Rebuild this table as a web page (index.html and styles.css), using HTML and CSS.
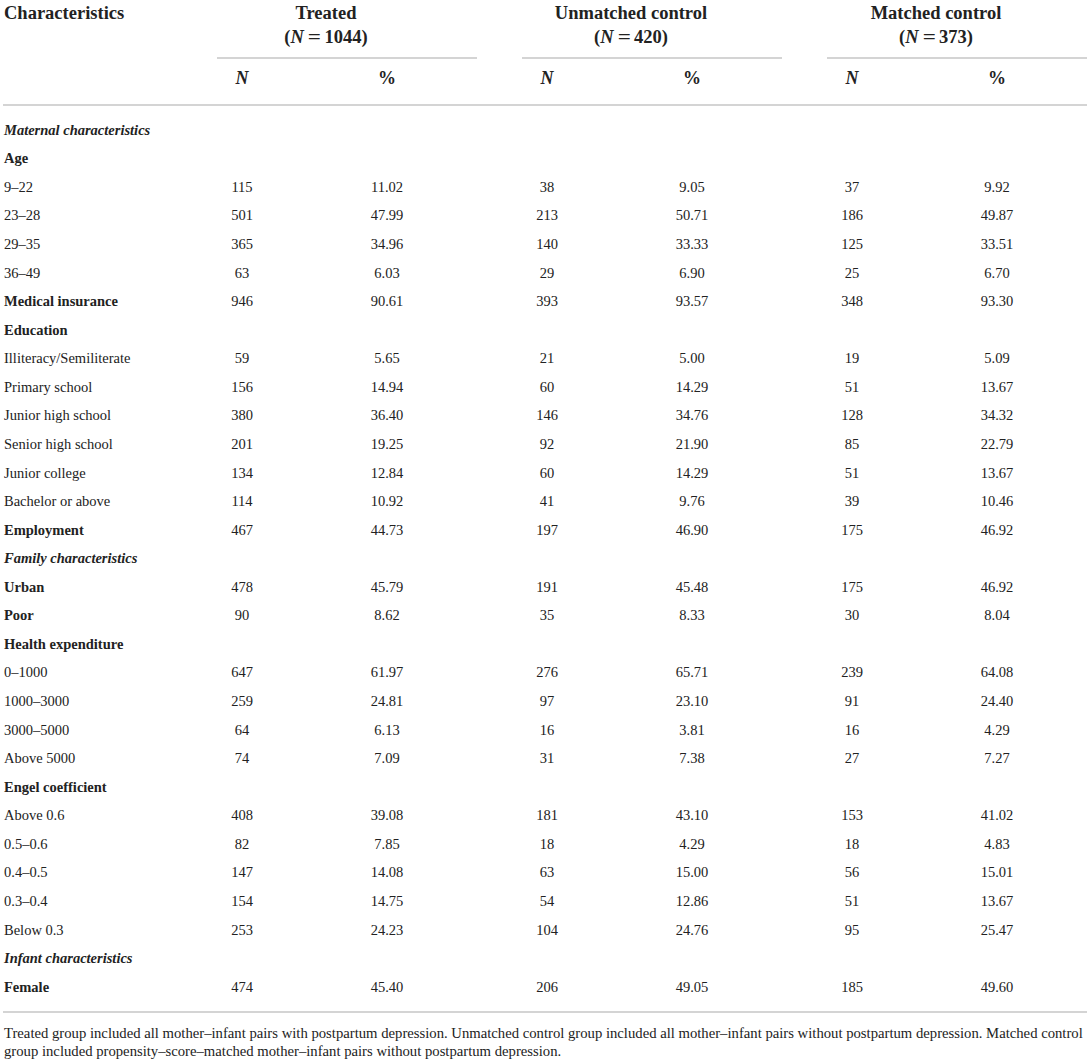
FILE: index.html
```html
<!DOCTYPE html>
<html>
<head>
<meta charset="utf-8">
<link rel="stylesheet" href="styles.css">
</head>
<body>
<div class="page">
  <div class="head">
    <div class="row hrow">
      <div class="hlabel">Characteristics</div>
      <div class="gh"><div class="gt">Treated<br>(<i>N</i><span class="eq">=</span>1044)</div></div>
      <div class="gh"><div class="gt">Unmatched control<br>(<i>N</i><span class="eq">=</span>420)</div></div>
      <div class="gh"><div class="gt">Matched control<br>(<i>N</i><span class="eq">=</span>373)</div></div>
    </div>
    <div class="row subrow">
      <div></div>
      <div class="g"><div class="c"><i>N</i></div><div class="c">%</div></div>
      <div class="g"><div class="c"><i>N</i></div><div class="c">%</div></div>
      <div class="g"><div class="c"><i>N</i></div><div class="c">%</div></div>
    </div>
  </div>
  <div class="body">
    <div class="row"><div class="lab it">Maternal characteristics</div></div>
    <div class="row"><div class="lab b">Age</div></div>
    <div class="row"><div class="lab">9–22</div><div class="g"><div class="c">115</div><div class="c">11.02</div></div><div class="g"><div class="c">38</div><div class="c">9.05</div></div><div class="g"><div class="c">37</div><div class="c">9.92</div></div></div>
    <div class="row"><div class="lab">23–28</div><div class="g"><div class="c">501</div><div class="c">47.99</div></div><div class="g"><div class="c">213</div><div class="c">50.71</div></div><div class="g"><div class="c">186</div><div class="c">49.87</div></div></div>
    <div class="row"><div class="lab">29–35</div><div class="g"><div class="c">365</div><div class="c">34.96</div></div><div class="g"><div class="c">140</div><div class="c">33.33</div></div><div class="g"><div class="c">125</div><div class="c">33.51</div></div></div>
    <div class="row"><div class="lab">36–49</div><div class="g"><div class="c">63</div><div class="c">6.03</div></div><div class="g"><div class="c">29</div><div class="c">6.90</div></div><div class="g"><div class="c">25</div><div class="c">6.70</div></div></div>
    <div class="row"><div class="lab b">Medical insurance</div><div class="g"><div class="c">946</div><div class="c">90.61</div></div><div class="g"><div class="c">393</div><div class="c">93.57</div></div><div class="g"><div class="c">348</div><div class="c">93.30</div></div></div>
    <div class="row"><div class="lab b">Education</div></div>
    <div class="row"><div class="lab">Illiteracy/Semiliterate</div><div class="g"><div class="c">59</div><div class="c">5.65</div></div><div class="g"><div class="c">21</div><div class="c">5.00</div></div><div class="g"><div class="c">19</div><div class="c">5.09</div></div></div>
    <div class="row"><div class="lab">Primary school</div><div class="g"><div class="c">156</div><div class="c">14.94</div></div><div class="g"><div class="c">60</div><div class="c">14.29</div></div><div class="g"><div class="c">51</div><div class="c">13.67</div></div></div>
    <div class="row"><div class="lab">Junior high school</div><div class="g"><div class="c">380</div><div class="c">36.40</div></div><div class="g"><div class="c">146</div><div class="c">34.76</div></div><div class="g"><div class="c">128</div><div class="c">34.32</div></div></div>
    <div class="row"><div class="lab">Senior high school</div><div class="g"><div class="c">201</div><div class="c">19.25</div></div><div class="g"><div class="c">92</div><div class="c">21.90</div></div><div class="g"><div class="c">85</div><div class="c">22.79</div></div></div>
    <div class="row"><div class="lab">Junior college</div><div class="g"><div class="c">134</div><div class="c">12.84</div></div><div class="g"><div class="c">60</div><div class="c">14.29</div></div><div class="g"><div class="c">51</div><div class="c">13.67</div></div></div>
    <div class="row"><div class="lab">Bachelor or above</div><div class="g"><div class="c">114</div><div class="c">10.92</div></div><div class="g"><div class="c">41</div><div class="c">9.76</div></div><div class="g"><div class="c">39</div><div class="c">10.46</div></div></div>
    <div class="row"><div class="lab b">Employment</div><div class="g"><div class="c">467</div><div class="c">44.73</div></div><div class="g"><div class="c">197</div><div class="c">46.90</div></div><div class="g"><div class="c">175</div><div class="c">46.92</div></div></div>
    <div class="row"><div class="lab it">Family characteristics</div></div>
    <div class="row"><div class="lab b">Urban</div><div class="g"><div class="c">478</div><div class="c">45.79</div></div><div class="g"><div class="c">191</div><div class="c">45.48</div></div><div class="g"><div class="c">175</div><div class="c">46.92</div></div></div>
    <div class="row"><div class="lab b">Poor</div><div class="g"><div class="c">90</div><div class="c">8.62</div></div><div class="g"><div class="c">35</div><div class="c">8.33</div></div><div class="g"><div class="c">30</div><div class="c">8.04</div></div></div>
    <div class="row"><div class="lab b">Health expenditure</div></div>
    <div class="row"><div class="lab">0–1000</div><div class="g"><div class="c">647</div><div class="c">61.97</div></div><div class="g"><div class="c">276</div><div class="c">65.71</div></div><div class="g"><div class="c">239</div><div class="c">64.08</div></div></div>
    <div class="row"><div class="lab">1000–3000</div><div class="g"><div class="c">259</div><div class="c">24.81</div></div><div class="g"><div class="c">97</div><div class="c">23.10</div></div><div class="g"><div class="c">91</div><div class="c">24.40</div></div></div>
    <div class="row"><div class="lab">3000–5000</div><div class="g"><div class="c">64</div><div class="c">6.13</div></div><div class="g"><div class="c">16</div><div class="c">3.81</div></div><div class="g"><div class="c">16</div><div class="c">4.29</div></div></div>
    <div class="row"><div class="lab">Above 5000</div><div class="g"><div class="c">74</div><div class="c">7.09</div></div><div class="g"><div class="c">31</div><div class="c">7.38</div></div><div class="g"><div class="c">27</div><div class="c">7.27</div></div></div>
    <div class="row"><div class="lab b">Engel coefficient</div></div>
    <div class="row"><div class="lab">Above 0.6</div><div class="g"><div class="c">408</div><div class="c">39.08</div></div><div class="g"><div class="c">181</div><div class="c">43.10</div></div><div class="g"><div class="c">153</div><div class="c">41.02</div></div></div>
    <div class="row"><div class="lab">0.5–0.6</div><div class="g"><div class="c">82</div><div class="c">7.85</div></div><div class="g"><div class="c">18</div><div class="c">4.29</div></div><div class="g"><div class="c">18</div><div class="c">4.83</div></div></div>
    <div class="row"><div class="lab">0.4–0.5</div><div class="g"><div class="c">147</div><div class="c">14.08</div></div><div class="g"><div class="c">63</div><div class="c">15.00</div></div><div class="g"><div class="c">56</div><div class="c">15.01</div></div></div>
    <div class="row"><div class="lab">0.3–0.4</div><div class="g"><div class="c">154</div><div class="c">14.75</div></div><div class="g"><div class="c">54</div><div class="c">12.86</div></div><div class="g"><div class="c">51</div><div class="c">13.67</div></div></div>
    <div class="row"><div class="lab">Below 0.3</div><div class="g"><div class="c">253</div><div class="c">24.23</div></div><div class="g"><div class="c">104</div><div class="c">24.76</div></div><div class="g"><div class="c">95</div><div class="c">25.47</div></div></div>
    <div class="row"><div class="lab it">Infant characteristics</div></div>
    <div class="row"><div class="lab b">Female</div><div class="g"><div class="c">474</div><div class="c">45.40</div></div><div class="g"><div class="c">206</div><div class="c">49.05</div></div><div class="g"><div class="c">185</div><div class="c">49.60</div></div></div>
  </div>
  <p class="note">Treated group included all mother–infant pairs with postpartum depression. Unmatched control group included all mother–infant pairs without postpartum depression. Matched control group included propensity–score–matched mother–infant pairs without postpartum depression.</p>
</div>
</body>
</html>
```
FILE: styles.css
```css
* { box-sizing: border-box; }
body {
  margin: 0;
  background: #fff;
  color: #222;
  font-family: "Liberation Serif", "Times New Roman", serif;
}
.page {
  padding: 0 4px 0 3px;
}
.row {
  display: grid;
  grid-template-columns: 169px repeat(3, 260px);
  column-gap: 45px;
  align-items: center;
}
.head {
  border-bottom: 2px solid #d4d4d4;
  padding-bottom: 14px;
}
.hrow {
  align-items: start;
  font-size: 18.5px;
  font-weight: bold;
  line-height: 24px;
  padding-top: 1px;
}
.hlabel {
  padding-left: 1px;
}
.gh {
  border-bottom: 2px solid #d4d4d4;
  padding-bottom: 8px;
}
.gt {
  width: 218px;
  text-align: center;
}
.eq {
  display: inline-block;
  margin: 0 5px;
  transform: scaleX(1.25);
}
.subrow {
  font-size: 18px;
  font-weight: bold;
  line-height: 24px;
  padding-top: 7px;
}
.g {
  display: grid;
  grid-template-columns: 50px 100px;
  column-gap: 70px;
}
.c {
  text-align: center;
  white-space: nowrap;
}
.body {
  padding: 10px 0 10px;
  border-bottom: 2px solid #d4d4d4;
  font-size: 14.5px;
}
.body .row {
  height: 28.57px;
}
.lab {
  padding-left: 1px;
  white-space: nowrap;
}
.b { font-weight: bold; }
.it { font-style: italic; font-weight: bold; }
.note {
  margin: 0;
  padding: 11px 0 0 1px;
  font-size: 14.7px;
  line-height: 18px;
}
```
